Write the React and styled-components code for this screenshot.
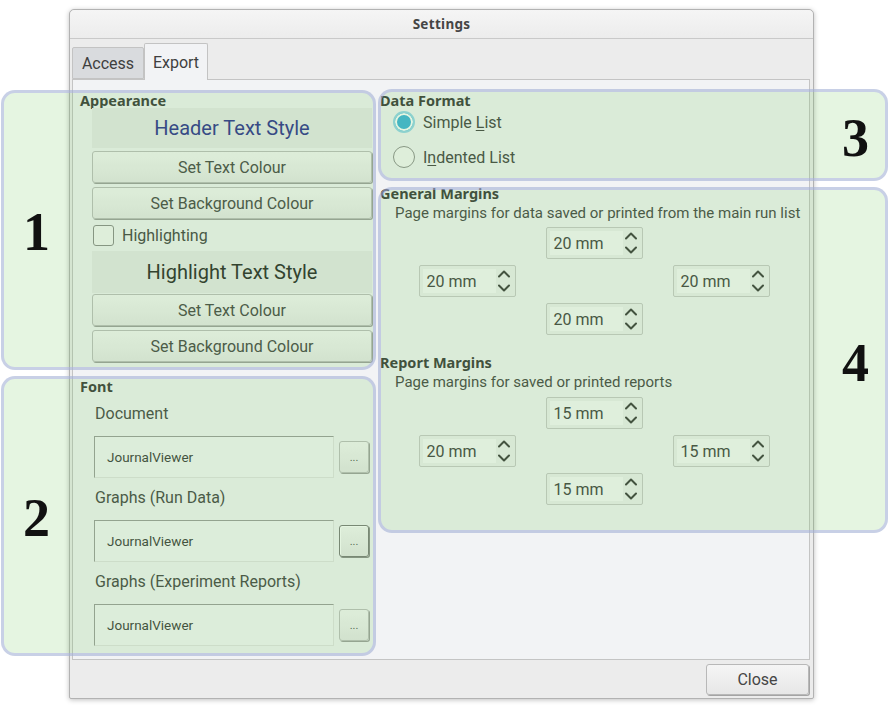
import React from "react";
import styled, { createGlobalStyle } from "styled-components";

const GlobalStyle = createGlobalStyle`
  html, body {
    margin: 0;
    padding: 0;
    background: #fff;
  }
  body {
    font-family: Roboto, "Noto Sans", sans-serif;
    color: #414141;
  }
`;

const Stage = styled.div`
  position: relative;
  width: 890px;
  height: 711px;
  padding: 9px 0 0 69px;
  box-sizing: border-box;
  overflow: hidden;
`;

const Dialog = styled.div`
  width: 745px;
  height: 690px;
  box-sizing: border-box;
  border: 1px solid #b2b2b2;
  border-radius: 5px 5px 2px 2px;
  background: #ececec;
  box-shadow: 0 1px 5px rgba(0, 0, 0, 0.25);
  display: flex;
  flex-direction: column;
`;

const TitleBar = styled.div`
  height: 29px;
  box-sizing: border-box;
  border-bottom: 1px solid #c9c9c9;
  border-radius: 5px 5px 0 0;
  background: linear-gradient(#f5f5f5, #ececec);
  display: flex;
  align-items: center;
  justify-content: center;
  font-family: "Noto Sans", Roboto, sans-serif;
  font-size: 13.5px;
  font-weight: 700;
  letter-spacing: 0.3px;
  color: #454545;
`;

const Body = styled.div`
  flex: 1;
  display: flex;
  flex-direction: column;
  padding: 4px 3px 0 2px;
`;

const TabBar = styled.div`
  height: 36px;
  display: flex;
  align-items: flex-end;
  position: relative;
  z-index: 1;
`;

const Tab = styled.div`
  box-sizing: border-box;
  height: ${(p) => (p.active ? 37 : 32)}px;
  width: ${(p) => p.w}px;
  margin-bottom: ${(p) => (p.active ? -1 : 0)}px;
  border: 1px solid #c3c3c3;
  border-bottom: ${(p) => (p.active ? "none" : "1px solid #c3c3c3")};
  border-radius: 2px 2px 0 0;
  background: ${(p) => (p.active ? "#f2f3f5" : "#d9dbde")};
  display: flex;
  align-items: center;
  justify-content: center;
  font-size: 16px;
  color: #3f3f3f;
  padding-top: ${(p) => (p.active ? 0 : 1)}px;
`;

const Panel = styled.div`
  height: 581px;
  box-sizing: border-box;
  border: 1px solid #c4c4c4;
  background: #f2f3f5;
  display: flex;
  padding-left: 4px;
`;

const LeftColumn = styled.div`
  width: 295px;
  display: flex;
  flex-direction: column;
`;

const RightColumn = styled.div`
  flex: 1;
  margin-left: 7px;
  display: flex;
  flex-direction: column;
`;

const GroupTitle = styled.div`
  height: 16px;
  line-height: 16px;
  margin-top: ${(p) => p.top}px;
  padding-left: ${(p) => p.indent}px;
  font-family: "Noto Sans", Roboto, sans-serif;
  font-size: 14.5px;
  font-weight: 700;
  color: #383838;
`;

const StyleBox = styled.div`
  margin-left: 15px;
  width: 280px;
  height: ${(p) => p.h}px;
  background: #e8e9ea;
  display: flex;
  align-items: center;
  justify-content: center;
  font-size: 20px;
  color: ${(p) => p.color};
`;

const PushButton = styled.div`
  margin-left: 15px;
  margin-top: ${(p) => p.top}px;
  width: 280px;
  height: 32px;
  box-sizing: border-box;
  border: 1px solid #bdbdbd;
  border-radius: 3px;
  background: linear-gradient(#f6f6f6, #e9e9e9);
  box-shadow: 1px 1px 0 #9e9e9e;
  display: flex;
  align-items: center;
  justify-content: center;
  font-size: 16px;
  color: #454545;
`;

const CheckRow = styled.div`
  height: 32px;
  margin-left: 16px;
  display: flex;
  align-items: center;
  gap: 8px;
  font-size: 16px;
`;

const CheckBox = styled.div`
  width: 21px;
  height: 21px;
  box-sizing: border-box;
  border: 1px solid #8c8c8c;
  border-radius: 3px;
  background: #f7f7f7;
`;

const FieldLabel = styled.div`
  height: 42px;
  line-height: 40px;
  padding-left: 18px;
  font-size: 16px;
  color: #444;
`;

const FieldRow = styled.div`
  height: 42px;
  margin-left: 17px;
  display: flex;
  align-items: center;
`;

const LineEdit = styled.div`
  width: 240px;
  height: 42px;
  box-sizing: border-box;
  border-top: 1px solid #9c9c9c;
  border-left: 1px solid #9c9c9c;
  border-right: 1px solid #e2e2e2;
  border-bottom: 1px solid #e2e2e2;
  background: #f5f6f7;
  padding-left: 12px;
  line-height: 40px;
  font-size: 13.5px;
  color: #3a3a3a;
`;

const DotsButton = styled.div`
  width: 30px;
  height: 32px;
  margin-left: 5px;
  box-sizing: border-box;
  border: 1px solid ${(p) => (p.pressed ? "#7a7a7a" : "#bdbdbd")};
  border-radius: 3px;
  background: linear-gradient(#f6f6f6, #e8e8e8);
  box-shadow: ${(p) =>
    p.pressed ? "inset 1px 1px 0 #fff, 1px 1px 0 #8a8a8a" : "1px 1px 0 #9e9e9e"};
  display: flex;
  align-items: flex-end;
  justify-content: center;
  padding-bottom: 8px;
  font-size: 11px;
  color: #555;
`;

const RadioRow = styled.div`
  height: 28px;
  margin-top: ${(p) => p.top}px;
  margin-left: 14px;
  display: flex;
  align-items: center;
  gap: 8px;
  font-size: 16px;

  u {
    text-decoration-thickness: 1px;
    text-underline-offset: 2px;
  }
`;

const Radio = styled.div`
  width: 22px;
  height: 22px;
  box-sizing: border-box;
  border-radius: 50%;
  border: ${(p) => (p.checked ? "2px solid #94d4e8" : "1px solid #8e8e8e")};
  background: ${(p) => (p.checked ? "#3cb2d9" : "#f7f7f7")};
  box-shadow: ${(p) => (p.checked ? "inset 0 0 0 2px #fff" : "none")};
`;

const Subtitle = styled.div`
  margin-top: 4px;
  margin-left: 16px;
  height: 16px;
  line-height: 16px;
  font-size: 15px;
  color: #444;
`;

const MarginGrid = styled.div`
  margin-top: ${(p) => p.top}px;
  display: grid;
  grid-template-columns: repeat(3, 97px);
  grid-template-rows: repeat(3, 32px);
  gap: 6px 30px;
  justify-content: center;
`;

const SpinBox = styled.div`
  grid-column: ${(p) => p.col};
  grid-row: ${(p) => p.row};
  box-sizing: border-box;
  border: 1px solid #c8c8c8;
  border-radius: 2px;
  background: #eeeff0;
  padding: 3px;
  display: flex;
`;

const SpinText = styled.div`
  flex: 0 0 69px;
  background: #f8f8f9;
  padding-left: 4px;
  line-height: 26px;
  font-size: 16px;
  color: #404040;
`;

const SpinArrows = styled.div`
  flex: 1;
  display: flex;
  flex-direction: column;
  align-items: center;
  justify-content: center;
  gap: 6px;
`;

const Footer = styled.div`
  flex: 1;
  display: flex;
  justify-content: flex-end;
  align-items: flex-start;
  padding: 4px 1px 0 0;
`;

const CloseButton = styled.div`
  width: 103px;
  height: 31px;
  box-sizing: border-box;
  border: 1px solid #b8b8b8;
  border-radius: 3px;
  background: linear-gradient(#f5f5f5, #e7e7e7);
  box-shadow: 1px 1px 0 #a4a4a4;
  display: flex;
  align-items: center;
  justify-content: center;
  font-size: 16px;
  color: #454545;
`;

const Callout = styled.div`
  position: absolute;
  left: ${(p) => p.x}px;
  top: ${(p) => p.y}px;
  width: ${(p) => p.w}px;
  height: ${(p) => p.h}px;
  box-sizing: border-box;
  border: 3px solid rgba(172, 172, 236, 0.5);
  border-radius: 14px;
  background: rgba(110, 200, 90, 0.18);
  display: flex;
  align-items: center;
  justify-content: ${(p) => (p.right ? "flex-end" : "flex-start")};
  padding: ${(p) => (p.right ? "6px 16px 0 0" : "4px 0 0 19px")};
`;

const CalloutNumber = styled.span`
  font-family: "Liberation Serif", "DejaVu Serif", serif;
  font-weight: 700;
  font-size: 54px;
  line-height: 1;
  color: #111;
`;

const Chevron = ({ down }) => (
  <svg width="12" height="8" viewBox="0 0 12 8">
    <polyline
      points={down ? "1,1.5 6,6.5 11,1.5" : "1,6.5 6,1.5 11,6.5"}
      fill="none"
      stroke="#3a3a3a"
      strokeWidth="2"
      strokeLinecap="round"
      strokeLinejoin="round"
    />
  </svg>
);

const Spin = ({ value, col, row }) => (
  <SpinBox col={col} row={row}>
    <SpinText>{value} mm</SpinText>
    <SpinArrows>
      <Chevron />
      <Chevron down />
    </SpinArrows>
  </SpinBox>
);

const Margins = ({ top, values }) => (
  <MarginGrid top={top}>
    <Spin value={values[0]} col={2} row={1} />
    <Spin value={values[1]} col={1} row={2} />
    <Spin value={values[2]} col={3} row={2} />
    <Spin value={values[3]} col={2} row={3} />
  </MarginGrid>
);

const fonts = [
  { label: "Document" },
  { label: "Graphs (Run Data)", pressed: true },
  { label: "Graphs (Experiment Reports)" },
];

const callouts = [
  { n: 1, x: 1, y: 90, w: 375, h: 280 },
  { n: 2, x: 1, y: 376, w: 375, h: 280 },
  { n: 3, x: 378, y: 89, w: 510, h: 92, right: true },
  { n: 4, x: 378, y: 187, w: 510, h: 346, right: true },
];

export default function App() {
  return (
    <>
      <GlobalStyle />
      <Stage>
        <Dialog>
          <TitleBar>Settings</TitleBar>
          <Body>
            <TabBar>
              <Tab w={72}>Access</Tab>
              <Tab w={64} active>
                Export
              </Tab>
            </TabBar>
            <Panel>
              <LeftColumn>
                <GroupTitle top={12} indent={3}>
                  Appearance
                </GroupTitle>
                <StyleBox h={40} color="#2b2f8f">
                  Header Text Style
                </StyleBox>
                <PushButton top={3}>Set Text Colour</PushButton>
                <PushButton top={4}>Set Background Colour</PushButton>
                <CheckRow>
                  <CheckBox />
                  Highlighting
                </CheckRow>
                <StyleBox h={42} color="#262626">
                  Highlight Text Style
                </StyleBox>
                <PushButton top={1}>Set Text Colour</PushButton>
                <PushButton top={4}>Set Background Colour</PushButton>

                <GroupTitle top={16} indent={3}>
                  Font
                </GroupTitle>
                {fonts.map((f) => (
                  <React.Fragment key={f.label}>
                    <FieldLabel>{f.label}</FieldLabel>
                    <FieldRow>
                      <LineEdit>JournalViewer</LineEdit>
                      <DotsButton pressed={f.pressed}>...</DotsButton>
                    </FieldRow>
                  </React.Fragment>
                ))}
              </LeftColumn>

              <RightColumn>
                <GroupTitle top={12} indent={1}>
                  Data Format
                </GroupTitle>
                <RadioRow top={0}>
                  <Radio checked />
                  <span>
                    Simple <u>L</u>ist
                  </span>
                </RadioRow>
                <RadioRow top={7}>
                  <Radio />
                  <span>
                    I<u>n</u>dented List
                  </span>
                </RadioRow>

                <GroupTitle top={14} indent={1}>
                  General Margins
                </GroupTitle>
                <Subtitle>
                  Page margins for data saved or printed from the main run list
                </Subtitle>
                <Margins top={6} values={[20, 20, 20, 20]} />

                <GroupTitle top={19} indent={1}>
                  Report Margins
                </GroupTitle>
                <Subtitle>Page margins for saved or printed reports</Subtitle>
                <Margins top={7} values={[15, 20, 15, 15]} />
              </RightColumn>
            </Panel>
            <Footer>
              <CloseButton>Close</CloseButton>
            </Footer>
          </Body>
        </Dialog>

        {callouts.map((c) => (
          <Callout key={c.n} x={c.x} y={c.y} w={c.w} h={c.h} right={c.right}>
            <CalloutNumber>{c.n}</CalloutNumber>
          </Callout>
        ))}
      </Stage>
    </>
  );
}
